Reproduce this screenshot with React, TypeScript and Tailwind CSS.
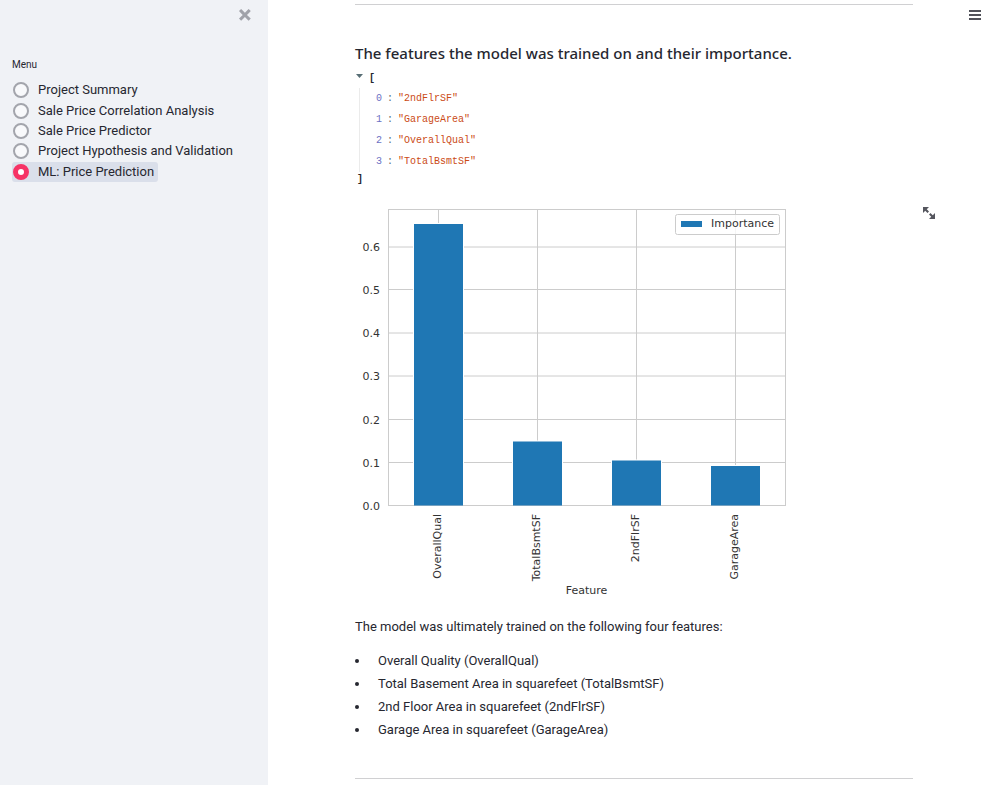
import { useState } from "react";

const MENU = [
  "Project Summary",
  "Sale Price Correlation Analysis",
  "Sale Price Predictor",
  "Project Hypothesis and Validation",
  "ML: Price Prediction",
];

const FEATURES = ["2ndFlrSF", "GarageArea", "OverallQual", "TotalBsmtSF"];

const NOTES = [
  "Overall Quality (OverallQual)",
  "Total Basement Area in squarefeet (TotalBsmtSF)",
  "2nd Floor Area in squarefeet (2ndFlrSF)",
  "Garage Area in squarefeet (GarageArea)",
];

const BARS = [
  { name: "OverallQual", x: 83.5, top: 24 },
  { name: "TotalBsmtSF", x: 182.5, top: 241.5 },
  { name: "2ndFlrSF", x: 281.5, top: 260.5 },
  { name: "GarageArea", x: 380.5, top: 266 },
];

const TICKS = [
  { label: "0.0", y: 305.5 },
  { label: "0.1", y: 262.5 },
  { label: "0.2", y: 219.5 },
  { label: "0.3", y: 176 },
  { label: "0.4", y: 133 },
  { label: "0.5", y: 89.5 },
  { label: "0.6", y: 47 },
];

function Sidebar() {
  const [selected, setSelected] = useState("ML: Price Prediction");
  return (
    <aside className="w-[268px] shrink-0 bg-[#f0f2f6] px-3">
      <div className="flex justify-end pt-[9px] pr-[5px]">
        <button aria-label="Close sidebar" className="text-[#a0a2a9]">
          <svg viewBox="0 0 8 8" className="block size-3" fill="currentColor">
            <path d="M1.41 0l-1.41 1.41.72.72 1.78 1.81-1.78 1.78-.72.69 1.41 1.44.72-.72 1.81-1.81 1.78 1.81.69.72 1.44-1.44-.72-.69-1.81-1.78 1.81-1.81.72-.72-1.44-1.41-.69.72-1.78 1.78-1.81-1.78-.72-.72z" />
          </svg>
        </button>
      </div>
      <fieldset className="mt-9">
        <legend className="text-[10px] leading-4">Menu</legend>
        <div className="mt-[7px] flex h-[102px] flex-col items-start justify-between">
          {MENU.map((item) => (
            <label
              key={item}
              className="flex h-[21px] items-center rounded-[3px] pr-1 pl-px text-[13px] leading-5 whitespace-nowrap has-checked:bg-[#dadfea]"
            >
              <input
                type="radio"
                name="menu"
                checked={selected === item}
                onChange={() => setSelected(item)}
                className="mr-[9px] size-4 appearance-none rounded-full border-2 border-[#a3a5ac] bg-[#f8f9fb] checked:border-[5px] checked:border-[#f63366] checked:bg-white"
              />
              {item}
            </label>
          ))}
        </div>
      </fieldset>
    </aside>
  );
}

function JsonView() {
  return (
    <div className="pb-3 font-['Liberation_Mono',monospace] text-[10px]">
      <div className="flex h-5 items-center">
        <button aria-label="Collapse array" className="mr-[6px] ml-px">
          <svg viewBox="0 0 7 4" className="mb-1 block h-1 w-[7px]" fill="#586e75">
            <path d="M0 0h7L3.500 4z" />
          </svg>
        </button>
        <span className="font-bold">[</span>
      </div>
      <ol className="ml-1 border-l border-[#ebebeb] pl-4">
        {FEATURES.map((name, i) => (
          <li key={name} className="flex h-[21px] items-center gap-[5px]">
            <span className="text-[#6c71c4]">{i}</span>
            <span className="text-[#586e75]">:</span>
            <span className="text-[#cb4b16]">"{name}"</span>
          </li>
        ))}
      </ol>
      <div className="h-4 pl-[2px] leading-4 font-bold">]</div>
    </div>
  );
}

function Chart() {
  return (
    <svg
      viewBox="0 0 440 400"
      className="block w-[440px] font-['DejaVu_Sans',sans-serif] text-[11px]"
      role="img"
      aria-label="Importance by feature"
    >
      <g stroke="#cccccc" fill="none">
        {TICKS.map((t) => (
          <path key={t.label} d={`M34 ${t.y}H430`} />
        ))}
        {BARS.map((b) => (
          <path key={b.name} d={`M${b.x} 9V305`} />
        ))}
        <rect x="33.500" y="9.500" width="397" height="296" />
      </g>
      {BARS.map((b) => (
        <g key={b.name}>
          <rect x={b.x - 25.5} y={b.top - 1} width="51" height={306 - b.top} fill="#ffffff" />
          <rect x={b.x - 24.5} y={b.top} width="49" height={305.5 - b.top} fill="#1f77b4" />
        </g>
      ))}
      <rect x="320.500" y="14.500" width="104" height="20" rx="2" fill="#ffffff" fillOpacity="0.8" stroke="#cccccc" />
      <rect x="326" y="21" width="21" height="6" fill="#1f77b4" />
      <g fill="#333333">
        <text x="356" y="27">Importance</text>
        {TICKS.map((t) => (
          <text key={t.label} x="25" y={t.y + 4} textAnchor="end">
            {t.label}
          </text>
        ))}
        {BARS.map((b) => (
          <text key={b.name} transform={`translate(${b.x + 2.500} 314) rotate(-90)`} textAnchor="end">
            {b.name}
          </text>
        ))}
        <text x="231.500" y="394" textAnchor="middle">
          Feature
        </text>
      </g>
    </svg>
  );
}

export default function App() {
  return (
    <div className="flex min-h-screen bg-white font-[Roboto,sans-serif] text-[13px] text-[#262730]">
      <Sidebar />
      <main className="relative min-w-0 flex-1 pt-1 pr-[84px] pl-[87px]">
        <button aria-label="Main menu" className="absolute top-[10px] right-4">
          <svg viewBox="0 0 12 10" className="block h-[10px] w-3" fill="currentColor">
            <path d="M0 0h12v2H0zM0 4h12v2H0zM0 8h12v2H0z" fillOpacity="0.8" />
          </svg>
        </button>
        <hr className="border-[#d0d0d2]" />
        <h3 className="mt-[35px] mb-px font-['Noto_Sans',sans-serif] text-[15px] leading-[27px] font-medium">
          The features the model was trained on and their importance.
        </h3>
        <JsonView />
        <figure className="relative">
          <Chart />
          <button aria-label="View fullscreen" className="absolute top-[7px] -right-[22px] text-[#55565e]">
            <svg viewBox="0 0 8 8" className="block size-3" fill="currentColor">
              <path d="M0 0v4l1.500-1.500 1.500 1.500 1-1-1.500-1.500 1.500-1.500h-4zm5 4l-1 1 1.500 1.500-1.500 1.500h4v-4l-1.500 1.500-1.500-1.500z" />
            </svg>
          </button>
        </figure>
        <p className="mt-[17px] leading-5">The model was ultimately trained on the following four features:</p>
        <ul className="mt-3">
          {NOTES.map((note) => (
            <li key={note} className="flex h-[23px] items-center">
              <span className="mr-[19px] size-1 rounded-full bg-[#262730]" />
              {note}
            </li>
          ))}
        </ul>
        <hr className="mt-[37px] border-[#d0d0d2]" />
      </main>
    </div>
  );
}
